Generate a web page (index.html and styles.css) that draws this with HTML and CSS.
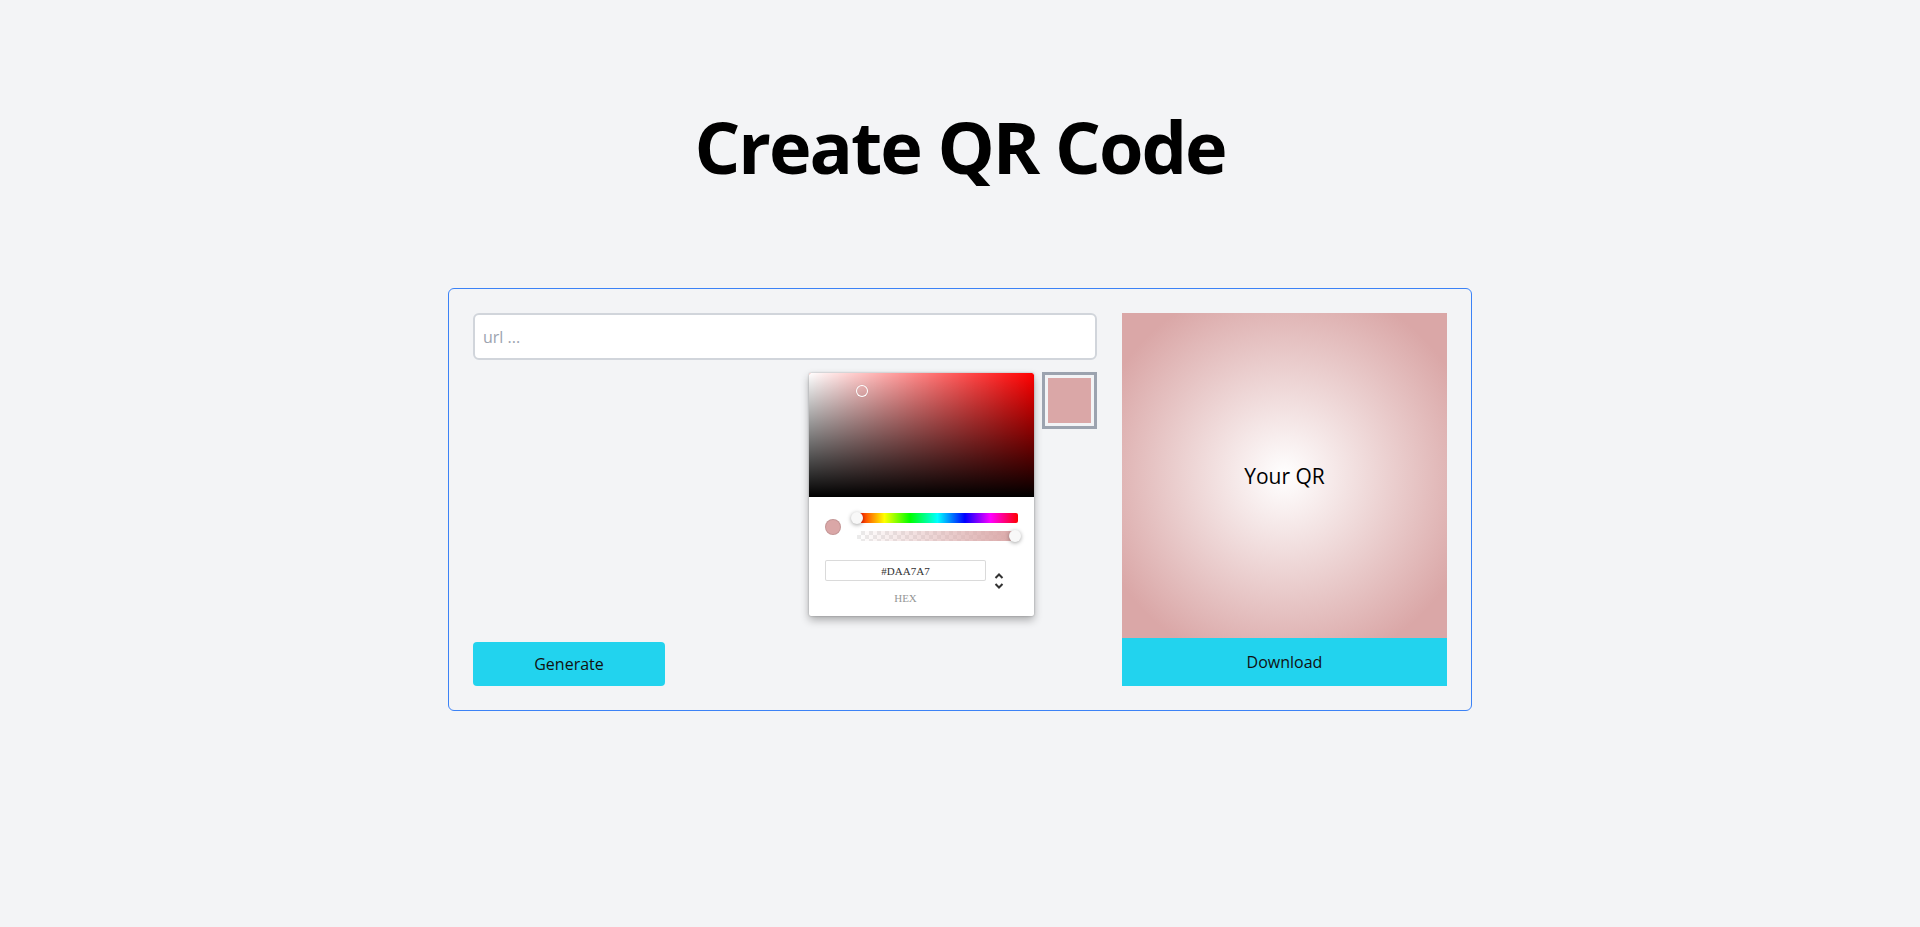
FILE: index.html
```html
<!DOCTYPE html>
<html lang="en">
<head>
<meta charset="utf-8">
<title>Create QR Code</title>
<link rel="stylesheet" href="styles.css">
</head>
<body>
<main class="page">
  <h1 class="title">Create QR Code</h1>
  <section class="card">
    <div class="left">
      <input class="url-input" type="text" placeholder="url ...">
      <div class="color-row">
        <div class="picker">
          <div class="saturation">
            <div class="sat-white"></div>
            <div class="sat-black"></div>
            <div class="sat-pointer" style="left:53px;top:18px"></div>
          </div>
          <div class="picker-body">
            <div class="controls">
              <div class="color-col">
                <div class="mini-swatch"></div>
              </div>
              <div class="toggles">
                <div class="hue">
                  <div class="slider-handle hue-handle"></div>
                </div>
                <div class="alpha">
                  <div class="checker"></div>
                  <div class="alpha-grad"></div>
                  <div class="slider-handle alpha-handle"></div>
                </div>
              </div>
            </div>
            <div class="fields-wrap">
              <div class="fields">
                <input class="hex-input" type="text" value="#DAA7A7">
                <span class="hex-label">hex</span>
              </div>
              <div class="toggle">
                <svg class="toggle-icon" width="14" height="18" viewBox="0 0 14 18">
                  <polyline points="3.5,6 7,2.5 10.5,6" fill="none" stroke="#333" stroke-width="2"/>
                  <polyline points="3.5,12 7,15.5 10.5,12" fill="none" stroke="#333" stroke-width="2"/>
                </svg>
              </div>
            </div>
          </div>
        </div>
        <button class="swatch-btn" type="button"><span class="swatch-fill"></span></button>
      </div>
      <button class="generate" type="button">Generate</button>
    </div>
    <div class="right">
      <div class="qr">Your QR</div>
      <button class="download" type="button">Download</button>
    </div>
  </section>
</main>
</body>
</html>
```
FILE: styles.css
```css
* { box-sizing: border-box; }
html, body { margin: 0; padding: 0; }
body {
  background: #f3f4f6;
  font-family: "Segoe UI", "Open Sans", "Noto Sans", sans-serif;
  color: #000;
  height: 927px;
}
.page {
  padding-top: 110px;
  display: flex;
  flex-direction: column;
  align-items: center;
}
.title {
  margin: 0;
  font-size: 72px;
  line-height: 72px;
  font-weight: 700;
  letter-spacing: -2px;
}
.card {
  margin-top: 106px;
  width: 1024px;
  border: 1px solid #3b82f6;
  border-radius: 6px;
  padding: 24px;
  display: grid;
  grid-template-columns: 1fr 325px;
  column-gap: 25px;
}
.left {
  display: flex;
  flex-direction: column;
}
.url-input {
  height: 47px;
  width: 100%;
  border: 2px solid #d1d5db;
  border-radius: 6px;
  background: #fff;
  padding: 0 8px;
  font-family: inherit;
  font-size: 16px;
  color: #111;
  outline: none;
}
.url-input::placeholder { color: #9ca3af; }
.color-row {
  margin-top: 12px;
  display: flex;
  justify-content: flex-end;
  align-items: flex-start;
  gap: 8px;
}
.picker {
  margin-top: 1px;
  width: 225px;
  background: #fff;
  border-radius: 2px;
  box-shadow: 0 0 2px rgba(0,0,0,.3), 0 4px 8px rgba(0,0,0,.3);
  font-family: "Liberation Serif", serif;
  overflow: hidden;
}
.saturation {
  position: relative;
  height: 124px;
  background: #f00;
  border-radius: 2px 2px 0 0;
}
.sat-white, .sat-black {
  position: absolute;
  inset: 0;
}
.sat-white { background: linear-gradient(to right, #fff, rgba(255,255,255,0)); }
.sat-black { background: linear-gradient(to top, #000, rgba(0,0,0,0)); }
.sat-pointer {
  position: absolute;
  width: 12px;
  height: 12px;
  border-radius: 6px;
  transform: translate(-6px, -6px);
  box-shadow: inset 0 0 0 1px #fff, 0 0 1px rgba(0,0,0,.2);
}
.picker-body {
  padding: 16px 16px 12px;
}
.controls { display: flex; }
.color-col { width: 32px; }
.mini-swatch {
  margin-top: 6px;
  width: 16px;
  height: 16px;
  border-radius: 8px;
  background: #daa7a7;
  box-shadow: inset 0 0 0 1px rgba(0,0,0,.1);
}
.toggles { flex: 1; }
.hue {
  position: relative;
  height: 10px;
  margin-bottom: 8px;
  background: linear-gradient(to right, #f00 0%, #ff0 17%, #0f0 33%, #0ff 50%, #00f 67%, #f0f 83%, #f00 100%);
  border-radius: 2px;
}
.alpha {
  position: relative;
  height: 10px;
  border-radius: 2px;
}
.checker {
  position: absolute;
  inset: 0;
  background-color: #fff;
  background-image:
    linear-gradient(45deg, rgba(0,0,0,.08) 25%, transparent 25%, transparent 75%, rgba(0,0,0,.08) 75%),
    linear-gradient(45deg, rgba(0,0,0,.08) 25%, transparent 25%, transparent 75%, rgba(0,0,0,.08) 75%);
  background-size: 8px 8px;
  background-position: 0 0, 4px 4px;
}
.alpha-grad {
  position: absolute;
  inset: 0;
  background: linear-gradient(to right, rgba(218,167,167,0), rgba(218,167,167,1));
}
.slider-handle {
  position: absolute;
  top: 0;
  width: 12px;
  height: 12px;
  border-radius: 6px;
  background: rgb(248,248,248);
  box-shadow: 0 1px 4px 0 rgba(0,0,0,.37);
}
.hue-handle { left: 0; transform: translate(-6px, -1px); }
.alpha-handle { left: calc(100% - 3px); transform: translate(-6px, -1px); }
.fields-wrap {
  padding-top: 19px;
  display: flex;
}
.fields {
  flex: 1;
  display: flex;
  flex-direction: column;
}
.hex-input {
  display: block;
  width: 100%;
  height: 21px;
  border: none;
  border-radius: 2px;
  box-shadow: inset 0 0 0 1px #dadada;
  font-family: "Liberation Serif", serif;
  font-size: 11px;
  color: #333;
  text-align: center;
  padding: 0;
  outline: none;
  background: #fff;
}
.hex-label {
  display: block;
  margin-top: 12px;
  font-size: 11px;
  line-height: 11px;
  color: #969696;
  text-transform: uppercase;
  text-align: center;
}
.toggle {
  width: 32px;
}
.toggle-icon {
  display: block;
  margin-top: 12px;
  margin-left: 6px;
}
.swatch-btn {
  width: 55px;
  height: 57px;
  border: 3px solid #9ca3af;
  padding: 3px;
  background: #f3f4f6;
  display: flex;
  cursor: pointer;
}
.swatch-fill {
  flex: 1;
  background: #daa7a7;
}
.generate {
  margin-top: auto;
  width: 192px;
  height: 44px;
  border: none;
  border-radius: 4px;
  background: #22d3ee;
  font-family: inherit;
  font-size: 16px;
  color: #111;
  cursor: pointer;
}
.right {
  display: flex;
  flex-direction: column;
}
.qr {
  width: 325px;
  height: 325px;
  background: radial-gradient(circle, #fff 0%, #daa7a7 85%);
  display: flex;
  align-items: center;
  justify-content: center;
  font-size: 21px;
  color: #000;
}
.download {
  height: 48px;
  border: none;
  background: #22d3ee;
  font-family: inherit;
  font-size: 16px;
  color: #111;
  cursor: pointer;
}
```
